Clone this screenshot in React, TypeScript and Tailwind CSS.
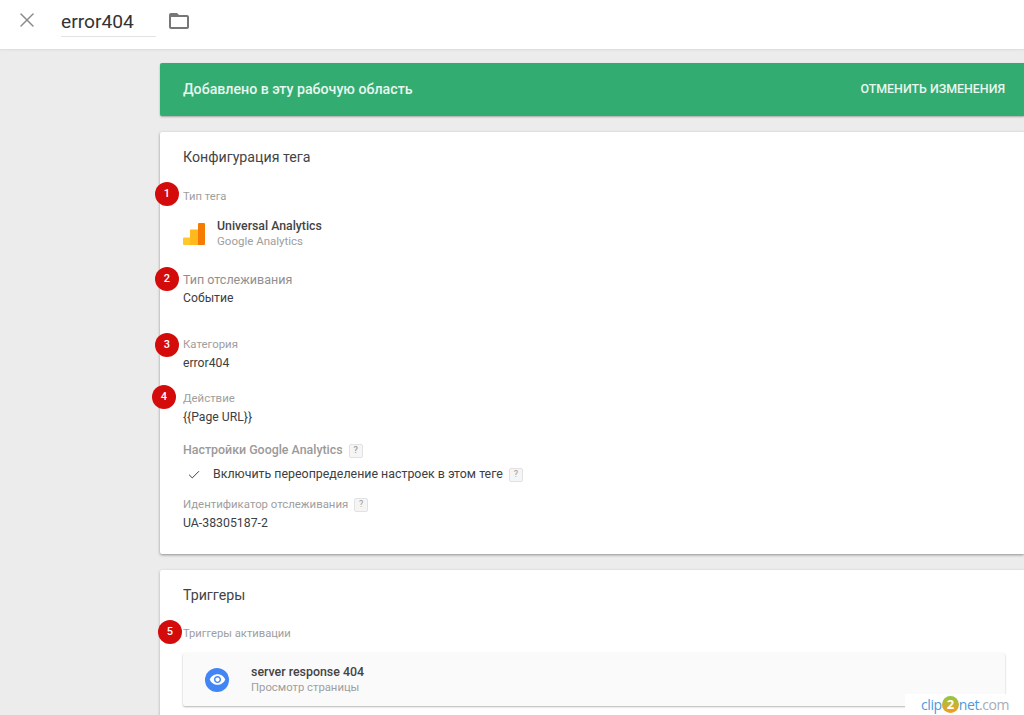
import { Check, X } from "lucide-react"

function Badge({ n, className }: { n: number; className: string }) {
  return (
    <span
      className={`absolute flex h-6 w-6 items-center justify-center rounded-full bg-[#d40b0b] text-[11px] font-medium text-white ${className}`}
    >
      {n}
    </span>
  )
}

function Help() {
  return (
    <span className="ml-[6px] inline-flex h-[14px] w-[14px] items-center justify-center rounded-[2px] border border-[#e2e2e2] bg-[#f5f5f5] text-[9px] leading-none text-[#9a9a9a]">
      ?
    </span>
  )
}

function Field({ label, value, className }: { label: string; value: string; className: string }) {
  return (
    <div className={className}>
      <div className="h-[19px] text-[11.4px] leading-[19px] text-[#9e9e9e]">{label}</div>
      <div className="h-[19px] text-[12.2px] leading-[19px] text-[#3c4043]">{value}</div>
    </div>
  )
}

export default function App() {
  return (
    <div className="h-[715px] overflow-hidden bg-[#ececec] font-['Roboto',sans-serif]">
      <header className="flex h-[49px] items-start bg-white shadow-[0_1px_2px_rgba(0,0,0,0.08)]">
        <X className="ml-[15px] mt-[8px] h-6 w-6 text-[#8a8a8a]" strokeWidth={1.5} />
        <div className="ml-[22px] mt-[8px] h-[29px] w-[95px] border-b border-[#e3e3e3] text-[19.2px] leading-[27px] text-[#333]">
          error404
        </div>
        <svg width="24" height="24" viewBox="0 0 24 24" className="ml-[11px] mt-[9px]" fill="#777">
          <path d="M20 6h-8l-2-2H4c-1.1 0-1.99.9-1.99 2L2 18c0 1.1.9 2 2 2h16c1.1 0 2-.9 2-2V8c0-1.1-.9-2-2-2zm0 12H4V8h16v10z" />
        </svg>
      </header>

      <main className="pl-[160px] pt-[14px]">
        <div className="flex h-[53px] items-center justify-between rounded-l-[2px] bg-[#33ac71] pl-[23px] pr-[19px] text-white shadow-[0_1px_2px_rgba(0,0,0,0.3)]">
          <span className="text-[14.2px] font-medium text-[#e9f6ef]">Добавлено в эту рабочую область</span>
          <span className="text-[12.4px] font-medium text-[#e9f6ef]">ОТМЕНИТЬ ИЗМЕНЕНИЯ</span>
        </div>

        <section className="relative mt-[16px] h-[422px] rounded-l-[2px] bg-white pl-[23px] pt-[16px] shadow-[0_1px_3px_rgba(0,0,0,0.4)]">
          <h2 className="h-[19px] text-[14.2px] leading-[19px] text-[#444]">Конфигурация тега</h2>
          <Badge n={1} className="left-[-5px] top-[50px]" />
          <div className="mt-[20px] h-[19px] text-[11.2px] leading-[19px] text-[#9e9e9e]">Тип тега</div>
          <div className="mt-[13px] flex items-center">
            <svg width="22" height="22" viewBox="0 0 22 22" className="shrink-0">
              <path d="M0 15.5a1 1 0 0 1 1-1h6V22H1a1 1 0 0 1-1-1z" fill="#ffc72a" />
              <rect x="7" y="6.5" width="8" height="15.5" fill="#ffb91c" />
              <path d="M15 1a1 1 0 0 1 1-1h5a1 1 0 0 1 1 1v20a1 1 0 0 1-1 1h-6z" fill="#f57c00" />
            </svg>
            <div className="ml-[12px]">
              <div className="h-[15px] text-[12.3px] font-medium leading-[15px] text-[#444]">Universal Analytics</div>
              <div className="h-[15px] text-[11.5px] leading-[15px] text-[#9e9e9e]">Google Analytics</div>
            </div>
          </div>

          <Badge n={2} className="left-[-5px] top-[135px]" />
          <div className="mt-[21px]">
            <div className="h-[19px] text-[12.5px] leading-[19px] text-[#8f8f8f]">Тип отслеживания</div>
            <div className="h-[19px] text-[12.2px] leading-[19px] text-[#3c4043]">Событие</div>
          </div>

          <Badge n={3} className="left-[-5px] top-[201px]" />
          <Field label="Категория" value="error404" className="mt-[27px]" />

          <Badge n={4} className="left-[-8px] top-[253px]" />
          <Field label="Действие" value="{{Page URL}}" className="mt-[16px]" />

          <div className="mt-[14px] flex h-[19px] items-center text-[12.4px] font-medium text-[#9a9a9a]">
            Настройки Google Analytics
            <Help />
          </div>
          <div className="mt-[5px] flex h-[19px] items-center text-[12.4px] text-[#3c4043]">
            <Check className="ml-[4px] mr-[12px] h-[14px] w-[14px] text-[#333]" strokeWidth={1.6} />
            Включить переопределение настроек в этом теге
            <Help />
          </div>
          <div className="mt-[11px] flex h-[19px] items-center text-[11.4px] text-[#9e9e9e]">
            Идентификатор отслеживания
            <Help />
          </div>
          <div className="h-[19px] text-[12.3px] leading-[19px] text-[#3c4043]">UA-38305187-2</div>
        </section>

        <section className="relative mt-[16px] h-[200px] rounded-l-[2px] bg-white pl-[23px] pr-[19px] pt-[16px] shadow-[0_1px_3px_rgba(0,0,0,0.3)]">
          <h2 className="h-[19px] text-[14.2px] leading-[19px] text-[#444]">Триггеры</h2>
          <Badge n={5} className="left-[-2px] top-[50px]" />
          <div className="mt-[19px] h-[19px] text-[11.2px] leading-[19px] text-[#9e9e9e]">Триггеры активации</div>
          <div className="mt-[10px] flex h-[53px] items-center rounded-[2px] bg-[#fafafa] pl-[22px] shadow-[0_1px_2px_rgba(0,0,0,0.3)]">
            <span className="flex h-6 w-6 items-center justify-center rounded-full bg-[#4285f4]">
              <svg width="17" height="17" viewBox="0 0 24 24" fill="#fff">
                <path d="M12 4.5C7 4.5 2.73 7.61 1 12c1.73 4.39 6 7.5 11 7.5s9.27-3.11 11-7.5c-1.73-4.39-6-7.5-11-7.5zM12 17c-2.76 0-5-2.24-5-5s2.24-5 5-5 5 2.24 5 5-2.24 5-5 5zm0-8c-1.66 0-3 1.34-3 3s1.34 3 3 3 3-1.34 3-3-1.34-3-3-3z" />
              </svg>
            </span>
            <div className="ml-[22px]">
              <div className="h-[16px] text-[12.4px] font-medium leading-[16px] text-[#444]">server response 404</div>
              <div className="h-[16px] text-[11.3px] leading-[16px] text-[#9e9e9e]">Просмотр страницы</div>
            </div>
          </div>
        </section>
      </main>

      <div className="absolute right-0 top-[694px] flex h-[21px] w-[119px] items-center bg-white pl-[16px] font-['Open_Sans',sans-serif] text-[14px] font-medium tracking-[-0.4px]">
        <span className="text-[#4a9bdc]">clip</span>
        <span className="flex h-[17px] w-[17px] items-center justify-center rounded-full bg-gradient-to-b from-[#8cc63f] to-[#f39a1e] text-[13px] font-bold text-white">2</span>
        <span className="text-[#4a9bdc]">net</span>
        <span className="text-[#a9adb3]">.com</span>
      </div>
    </div>
  )
}
